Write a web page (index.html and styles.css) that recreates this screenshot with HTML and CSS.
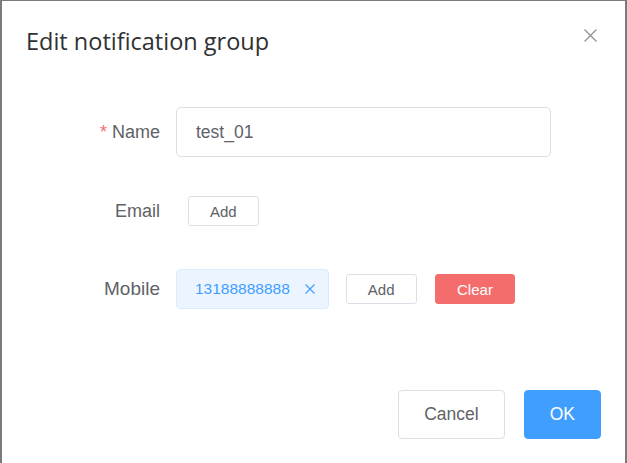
FILE: index.html
```html
<!DOCTYPE html>
<html>
<head>
<meta charset="utf-8">
<link rel="stylesheet" href="styles.css">
</head>
<body>
<div class="frame">
  <div class="dialog">
    <div class="header">
      <span class="title">Edit notification group</span>
      <svg class="close" width="13" height="13" viewBox="0 0 13 13"><path d="M0.5 0.5L12.5 12.5M12.5 0.5L0.5 12.5" stroke="#909399" stroke-width="1.3" fill="none"/></svg>
    </div>
    <div class="form">
      <div class="row">
        <label class="label"><span class="star">*</span>Name</label>
        <input class="input" type="text" value="test_01">
      </div>
      <div class="row row-email">
        <label class="label">Email</label>
        <button class="btn-sm first">Add</button>
      </div>
      <div class="row row-mobile">
        <label class="label mobile">Mobile</label>
        <span class="tag">13188888888<svg class="tag-x" width="10" height="10" viewBox="0 0 10 10"><path d="M0.5 0.5L9.5 9.5M9.5 0.5L0.5 9.5" stroke="#409eff" stroke-width="1.2" fill="none"/></svg></span>
        <button class="btn-sm">Add</button>
        <button class="btn-sm danger">Clear</button>
      </div>
    </div>
    <div class="footer">
      <button class="btn-lg">Cancel</button>
      <button class="btn-lg primary">OK</button>
    </div>
  </div>
</div>
</body>
</html>
```
FILE: styles.css
```css
html, body {
  margin: 0;
  padding: 0;
  background: #fff;
}
.frame {
  width: 627px;
  height: 463px;
  box-sizing: border-box;
  border-left: 2px solid #7b7b7b;
  border-top: 1px solid #7b7b7b;
  border-right: 2px solid #7b7b7b;
  background: #fff;
}
.dialog {
  display: flex;
  flex-direction: column;
  height: 100%;
}
.header {
  display: flex;
  justify-content: space-between;
  align-items: flex-start;
  padding: 24px 28px 0 24px;
}
.title {
  font-family: "Open Sans", "Noto Sans", sans-serif;
  font-size: 23.5px;
  line-height: 32px;
  color: #303133;
}
.close {
  margin-top: 4px;
  display: block;
}
.form {
  padding-top: 50px;
  font-family: "Liberation Sans", Arial, sans-serif;
}
.row {
  display: flex;
  align-items: center;
  height: 50px;
}
.row-email {
  margin-top: 29px;
}
.row-mobile {
  margin-top: 28px;
}
.label {
  width: 174px;
  box-sizing: border-box;
  padding-right: 16px;
  text-align: right;
  font-size: 18px;
  color: #606266;
}
.label.mobile {
  font-size: 19px;
}
.star {
  color: #f56c6c;
  margin-right: 5px;
}
.input {
  width: 375px;
  height: 50px;
  box-sizing: border-box;
  border: 1px solid #dcdfe6;
  border-radius: 5px;
  padding: 0 0 0 19px;
  font-family: "Liberation Sans", Arial, sans-serif;
  font-size: 17.5px;
  color: #606266;
  outline: none;
  margin: 0;
}
.btn-sm {
  height: 30px;
  box-sizing: border-box;
  padding: 0 21px;
  border: 1px solid #dcdfe6;
  border-radius: 3px;
  background: #fff;
  font-family: "Liberation Sans", Arial, sans-serif;
  font-size: 15px;
  color: #606266;
  margin: 0 0 0 18px;
}
.btn-sm.first {
  margin-left: 12px;
}
.btn-sm.danger {
  background: #f56c6c;
  border-color: #f56c6c;
  color: #fff;
  padding: 0 21.5px;
  margin-left: 18px;
}
.tag {
  display: inline-flex;
  align-items: center;
  height: 40px;
  box-sizing: border-box;
  padding: 0 13px 0 18px;
  background: #ecf5ff;
  border: 1px solid #d9ecff;
  border-radius: 4px;
  font-size: 15.5px;
  color: #409eff;
  margin-right: -1px;
}
.tag-x {
  margin-left: 15px;
  display: block;
}
.footer {
  margin-top: auto;
  display: flex;
  justify-content: flex-end;
  gap: 19px;
  padding: 0 24px 24px 0;
}
.btn-lg {
  height: 49px;
  box-sizing: border-box;
  padding: 0 25px;
  border: 1px solid #dcdfe6;
  border-radius: 4px;
  background: #fff;
  font-family: "Liberation Sans", Arial, sans-serif;
  font-size: 17.5px;
  color: #606266;
  margin: 0;
}
.btn-lg.primary {
  background: #409eff;
  border-color: #409eff;
  color: #fff;
}
```
